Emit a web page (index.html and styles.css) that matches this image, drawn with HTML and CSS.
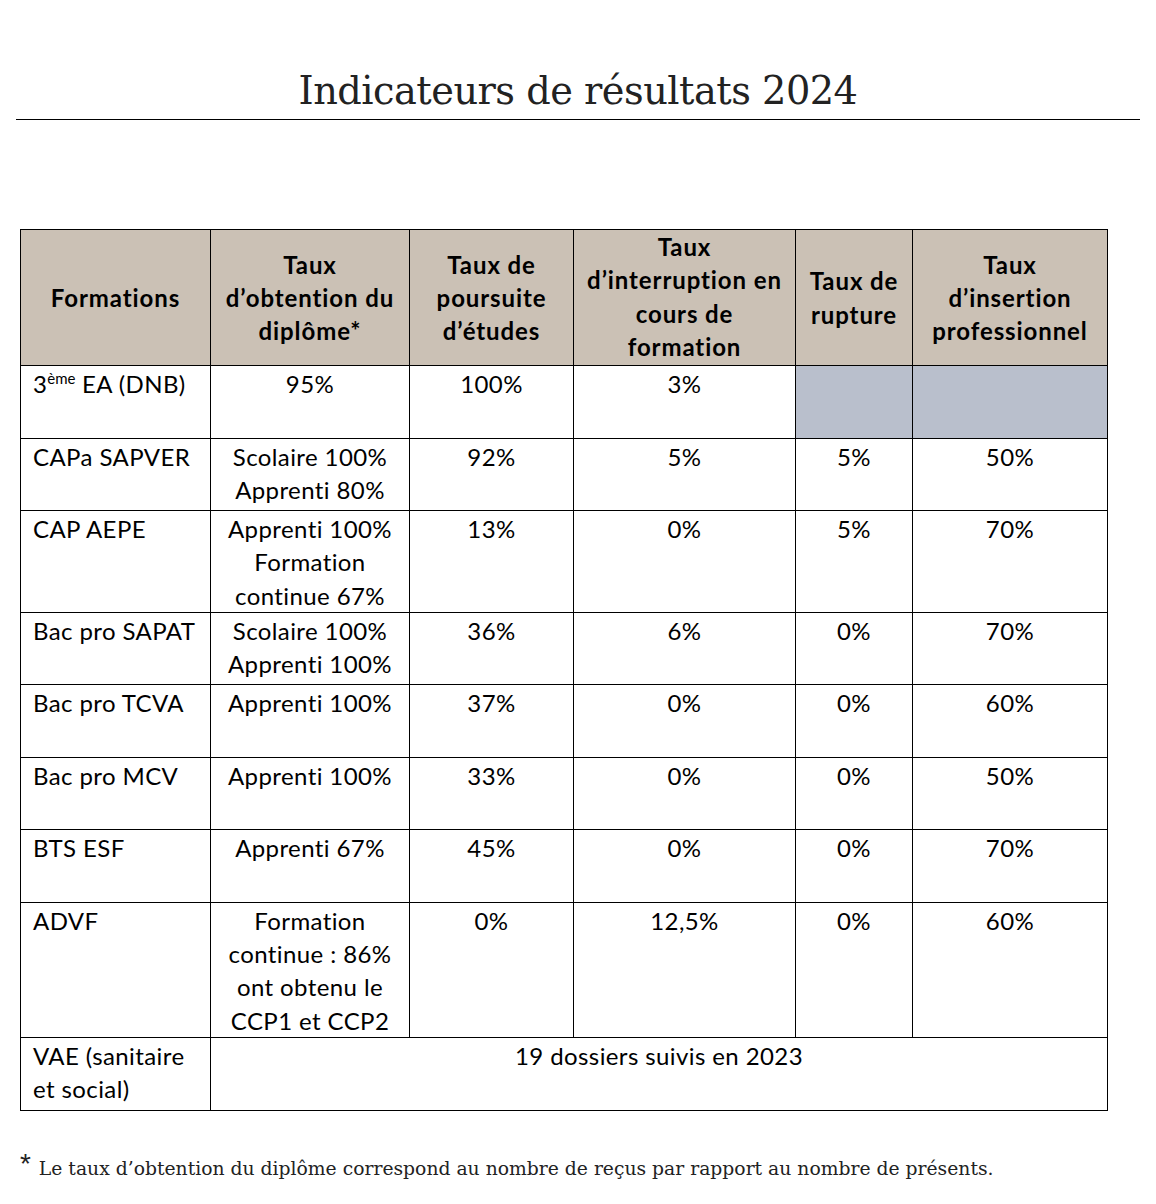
FILE: index.html
```html
<!DOCTYPE html>
<html lang="fr">
<head>
<meta charset="utf-8">
<title>Indicateurs de résultats 2024</title>
<link rel="stylesheet" href="styles.css">
</head>
<body>
<div class="page">
  <header class="title-wrap">
    <h1 class="title">Indicateurs de résultats 2024</h1>
  </header>
  <table class="results">
    <colgroup>
      <col class="c1"><col class="c2"><col class="c3"><col class="c4"><col class="c5"><col class="c6">
    </colgroup>
    <thead>
      <tr class="head">
        <th class="mid">Formations</th>
        <th>Taux<br>d’obtention du<br>diplôme*</th>
        <th>Taux de<br>poursuite<br>d’études</th>
        <th class="top">Taux<br>d’interruption en<br>cours de<br>formation</th>
        <th>Taux de<br>rupture</th>
        <th>Taux<br>d’insertion<br>professionnel</th>
      </tr>
    </thead>
    <tbody>
      <tr class="r2">
        <td class="name">3<sup>ème</sup> EA (DNB)</td>
        <td>95%</td><td>100%</td><td>3%</td><td class="gray"></td><td class="gray"></td>
      </tr>
      <tr class="r2">
        <td class="name">CAPa SAPVER</td>
        <td>Scolaire 100%<br>Apprenti 80%</td><td>92%</td><td>5%</td><td>5%</td><td>50%</td>
      </tr>
      <tr class="r3">
        <td class="name">CAP AEPE</td>
        <td>Apprenti 100%<br>Formation<br>continue 67%</td><td>13%</td><td>0%</td><td>5%</td><td>70%</td>
      </tr>
      <tr class="r2">
        <td class="name">Bac pro SAPAT</td>
        <td>Scolaire 100%<br>Apprenti 100%</td><td>36%</td><td>6%</td><td>0%</td><td>70%</td>
      </tr>
      <tr class="r2">
        <td class="name">Bac pro TCVA</td>
        <td>Apprenti 100%</td><td>37%</td><td>0%</td><td>0%</td><td>60%</td>
      </tr>
      <tr class="r2">
        <td class="name">Bac pro MCV</td>
        <td>Apprenti 100%</td><td>33%</td><td>0%</td><td>0%</td><td>50%</td>
      </tr>
      <tr class="r2">
        <td class="name">BTS ESF</td>
        <td>Apprenti 67%</td><td>45%</td><td>0%</td><td>0%</td><td>70%</td>
      </tr>
      <tr class="r4">
        <td class="name">ADVF</td>
        <td>Formation<br>continue : 86%<br>ont obtenu le<br>CCP1 et CCP2</td><td>0%</td><td>12,5%</td><td>0%</td><td>60%</td>
      </tr>
      <tr class="r2">
        <td class="name">VAE (sanitaire<br>et social)</td>
        <td colspan="5">19 dossiers suivis en 2023</td>
      </tr>
    </tbody>
  </table>
  <p class="note"><span class="star">*</span> Le taux d’obtention du diplôme correspond au nombre de reçus par rapport au nombre de présents.</p>
</div>
</body>
</html>
```

FILE: styles.css
```css
html, body {
  margin: 0;
  padding: 0;
  background: #ffffff;
}

.page {
  width: 1156px;
  padding-top: 63px;
}

.title-wrap {
  margin: 0 16px;
  border-bottom: 1px solid #000;
  text-align: center;
}

.title {
  margin: 0;
  font-family: "DejaVu Serif", serif;
  font-weight: normal;
  font-size: 38.3px;
  line-height: 56px;
  color: #222;
  letter-spacing: -0.5px;
}

.results {
  margin: 109px 0 0 20px;
  border-collapse: collapse;
  table-layout: fixed;
  width: 1088px;
  font-family: "Lato", sans-serif;
  font-size: 24px;
  letter-spacing: 0.4px;
  line-height: 33.3px;
  color: #000;
}

.c1 { width: 190px; }
.c2 { width: 199px; }
.c3 { width: 164px; }
.c4 { width: 222px; }
.c5 { width: 117px; }
.c6 { width: 195px; }

.results th,
.results td {
  border: 1px solid #000;
  padding: 1px 2px 0;
  text-align: center;
  vertical-align: top;
  white-space: nowrap;
}

.results th {
  background: #cbc1b5;
  font-weight: bold;
  letter-spacing: 0.9px;
  vertical-align: middle;
  height: 135px;
  padding: 0 2px;
}

.results th.top {
  vertical-align: top;
}

.results td.name {
  text-align: left;
  padding-left: 12px;
}

.results td.gray {
  background: #b9bfcc;
}

.r2 td { height: 70.5px; }
.r3 td { height: 99px; }
.r4 td { height: 133px; }

.results sup {
  font-size: 15px;
  letter-spacing: 0;
  line-height: 0;
  vertical-align: 9px;
}

.note {
  margin: 47px 0 0 20px;
  font-family: "DejaVu Serif", serif;
  font-size: 18.75px;
  color: #222;
  white-space: nowrap;
}

.star {
  font-family: "Liberation Sans", sans-serif;
  font-size: 28px;
  line-height: 0;
  vertical-align: 2px;
  margin-right: 2px;
}
```
